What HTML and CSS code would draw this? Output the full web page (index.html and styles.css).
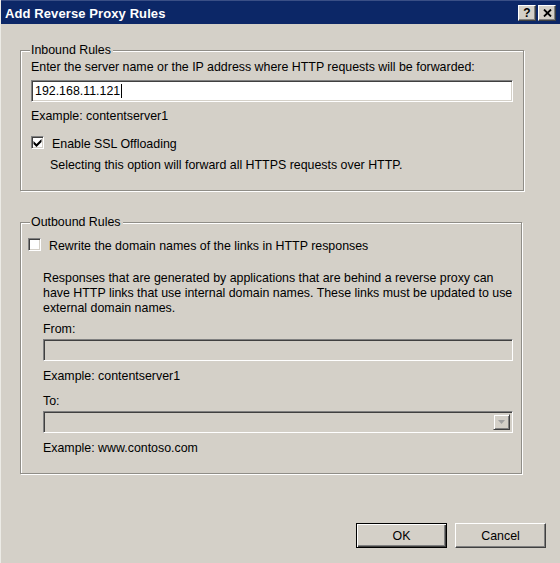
FILE: index.html
```html
<!DOCTYPE html>
<html>
<head>
<meta charset="utf-8">
<title>Add Reverse Proxy Rules</title>
<link rel="stylesheet" href="styles.css">
</head>
<body>
<div class="window">
  <div class="titlebar">
    <span class="title">Add Reverse Proxy Rules</span>
    <div class="caption-buttons">
      <span class="cap-btn help">?</span>
      <span class="cap-btn close">
        <svg width="9" height="8" viewBox="0 0 9 8"><path d="M1 0.5 L8 7.5 M8 0.5 L1 7.5" stroke="#000" stroke-width="1.8"/></svg>
      </span>
    </div>
  </div>
  <div class="client">
    <fieldset class="group inbound">
      <legend>Inbound Rules</legend>
      <div class="line l1">Enter the server name or the IP address where HTTP requests will be forwarded:</div>
      <div class="textbox t1"><span class="value">192.168.11.121</span><span class="caret"></span></div>
      <div class="line l2">Example: contentserver1</div>
      <label class="check-row r1"><span class="checkbox checked"><svg width="9" height="9" viewBox="0 0 9 9"><path d="M0.5 3 L3.5 6 L8.5 1 L8.5 4 L3.5 9 L0.5 6 Z" fill="#000"/></svg></span><span class="check-label">Enable SSL Offloading</span></label>
      <div class="line l3 sub">Selecting this option will forward all HTTPS requests over HTTP.</div>
    </fieldset>

    <fieldset class="group outbound">
      <legend>Outbound Rules</legend>
      <label class="check-row r2"><span class="checkbox"></span><span class="check-label">Rewrite the domain names of the links in HTTP responses</span></label>
      <div class="indent">
        <div class="para">Responses that are generated by applications that are behind a reverse proxy can have HTTP links that use internal domain names. These links must be updated to use external domain names.</div>
        <div class="line m1">From:</div>
        <div class="textbox disabled m2"></div>
        <div class="line m3">Example: contentserver1</div>
        <div class="line m4">To:</div>
        <div class="textbox disabled combo m5"><span class="drop"><svg width="7" height="4" viewBox="0 0 7 4"><path d="M0 0 H7 L3.5 4 Z" fill="#a0a0a0"/></svg></span></div>
        <div class="line m6">Example: www.contoso.com</div>
      </div>
    </fieldset>

    <div class="buttons">
      <button class="btn default">OK</button>
      <button class="btn">Cancel</button>
    </div>
  </div>
</div>
</body>
</html>
```

FILE: styles.css
```css
html, body {
  margin: 0;
  padding: 0;
  background: #d4d0c8;
}

.window {
  width: 560px;
  height: 563px;
  background: #d4d0c8;
  font-family: "Liberation Sans", Arial, sans-serif;
  font-size: 12.4px;
  color: #000;
  box-sizing: border-box;
  border-left: 1px solid #ecebe6;
  overflow: hidden;
}

.titlebar {
  height: 24px;
  background: #0c2767;
  border-top: 1px solid #3a4f86;
  box-sizing: border-box;
  display: flex;
  align-items: center;
  justify-content: space-between;
  padding: 0 4px 0 4px;
}

.title {
  color: #fff;
  font-weight: bold;
  font-size: 13px;
  letter-spacing: 0.1px;
  margin-top: 1px;
}

.caption-buttons {
  display: flex;
  gap: 2px;
  margin-top: 1px;
}

.cap-btn {
  width: 16px;
  height: 14px;
  background: #d4d0c8;
  border-top: 1px solid #fff;
  border-left: 1px solid #fff;
  border-right: 1px solid #404040;
  border-bottom: 1px solid #404040;
  box-shadow: inset -1px -1px 0 #808080;
  display: flex;
  align-items: center;
  justify-content: center;
  font-weight: bold;
  font-size: 12px;
  line-height: 14px;
}

.client {
  padding: 0 0 0 19px;
}

.group {
  margin: 0;
  padding: 0 10px 0 10px;
  border: 1px solid #8f8d87;
  box-shadow: inset 1px 1px 0 #fff, 1px 1px 0 #fff;
  box-sizing: border-box;
}

.group legend {
  padding: 0 2px 0 1px;
  margin-left: -1px;
  line-height: 14px;
  background: #d4d0c8;
}

.inbound {
  width: 504px;
  margin-top: 19px;
  padding-bottom: 17px;
}

.outbound {
  width: 502px;
  margin-top: 24px;
  padding-right: 8px;
  padding-bottom: 17px;
}

.line {
  line-height: 15px;
  white-space: nowrap;
}

.l1 { margin-top: 3px; }
.l2 { margin-top: 7px; }
.l3 { margin-top: 8px; }
.sub { padding-left: 19px; }

.textbox {
  height: 22px;
  box-sizing: border-box;
  background: #fff;
  border-top: 1px solid #808080;
  border-left: 1px solid #808080;
  border-right: 1px solid #fff;
  border-bottom: 1px solid #fff;
  box-shadow: inset 1px 1px 0 #404040, inset -1px -1px 0 #d4d0c8;
  display: flex;
  align-items: center;
  padding-left: 3px;
}

.t1 { margin-top: 5px; }

.textbox .caret {
  width: 1px;
  height: 14px;
  background: #000;
  margin-left: 1px;
}

.textbox.disabled {
  background: #d4d0c8;
}

.combo {
  justify-content: flex-end;
  padding: 0 2px 0 0;
}

.drop {
  width: 17px;
  height: 16px;
  box-sizing: border-box;
  background: #d4d0c8;
  border-top: 1px solid #d4d0c8;
  border-left: 1px solid #d4d0c8;
  border-right: 1px solid #404040;
  border-bottom: 1px solid #404040;
  box-shadow: inset 1px 1px 0 #fff, inset -1px -1px 0 #808080;
  display: flex;
  align-items: center;
  justify-content: center;
}

.check-row {
  display: flex;
  align-items: center;
  height: 15px;
}

.r1 { margin-top: 11px; }
.r2 { margin-top: 8px; margin-left: -3px; }

.checkbox {
  width: 13px;
  height: 13px;
  box-sizing: border-box;
  background: #fff;
  border-top: 1px solid #808080;
  border-left: 1px solid #808080;
  border-right: 1px solid #fff;
  border-bottom: 1px solid #fff;
  box-shadow: inset 1px 1px 0 #404040, inset -1px -1px 0 #d4d0c8;
  display: flex;
  align-items: center;
  justify-content: center;
  flex: none;
}

.check-label {
  margin-left: 8px;
  padding-top: 2px;
}

.indent {
  margin-left: 12px;
}

.para {
  margin-top: 19px;
  line-height: 15px;
}

.m1 { margin-top: 6px; }
.m2 { margin-top: 2px; }
.m3 { margin-top: 8px; }
.m4 { margin-top: 10px; }
.m5 { margin-top: 2px; }
.m6 { margin-top: 8px; }

.buttons {
  display: flex;
  justify-content: flex-end;
  gap: 8px;
  margin-top: 49px;
  padding-right: 14px;
}

.btn {
  width: 91px;
  height: 25px;
  box-sizing: border-box;
  font-family: "Liberation Sans", Arial, sans-serif;
  font-size: 12.4px;
  color: #000;
  background: #d4d0c8;
  border-top: 1px solid #fff;
  border-left: 1px solid #fff;
  border-right: 1px solid #404040;
  border-bottom: 1px solid #404040;
  box-shadow: inset -1px -1px 0 #808080;
  padding: 0;
  margin: 0;
}

.btn.default {
  border: 1px solid #000;
  box-shadow: inset 1px 1px 0 #fff, inset -1px -1px 0 #404040, inset -2px -2px 0 #808080;
}
```
